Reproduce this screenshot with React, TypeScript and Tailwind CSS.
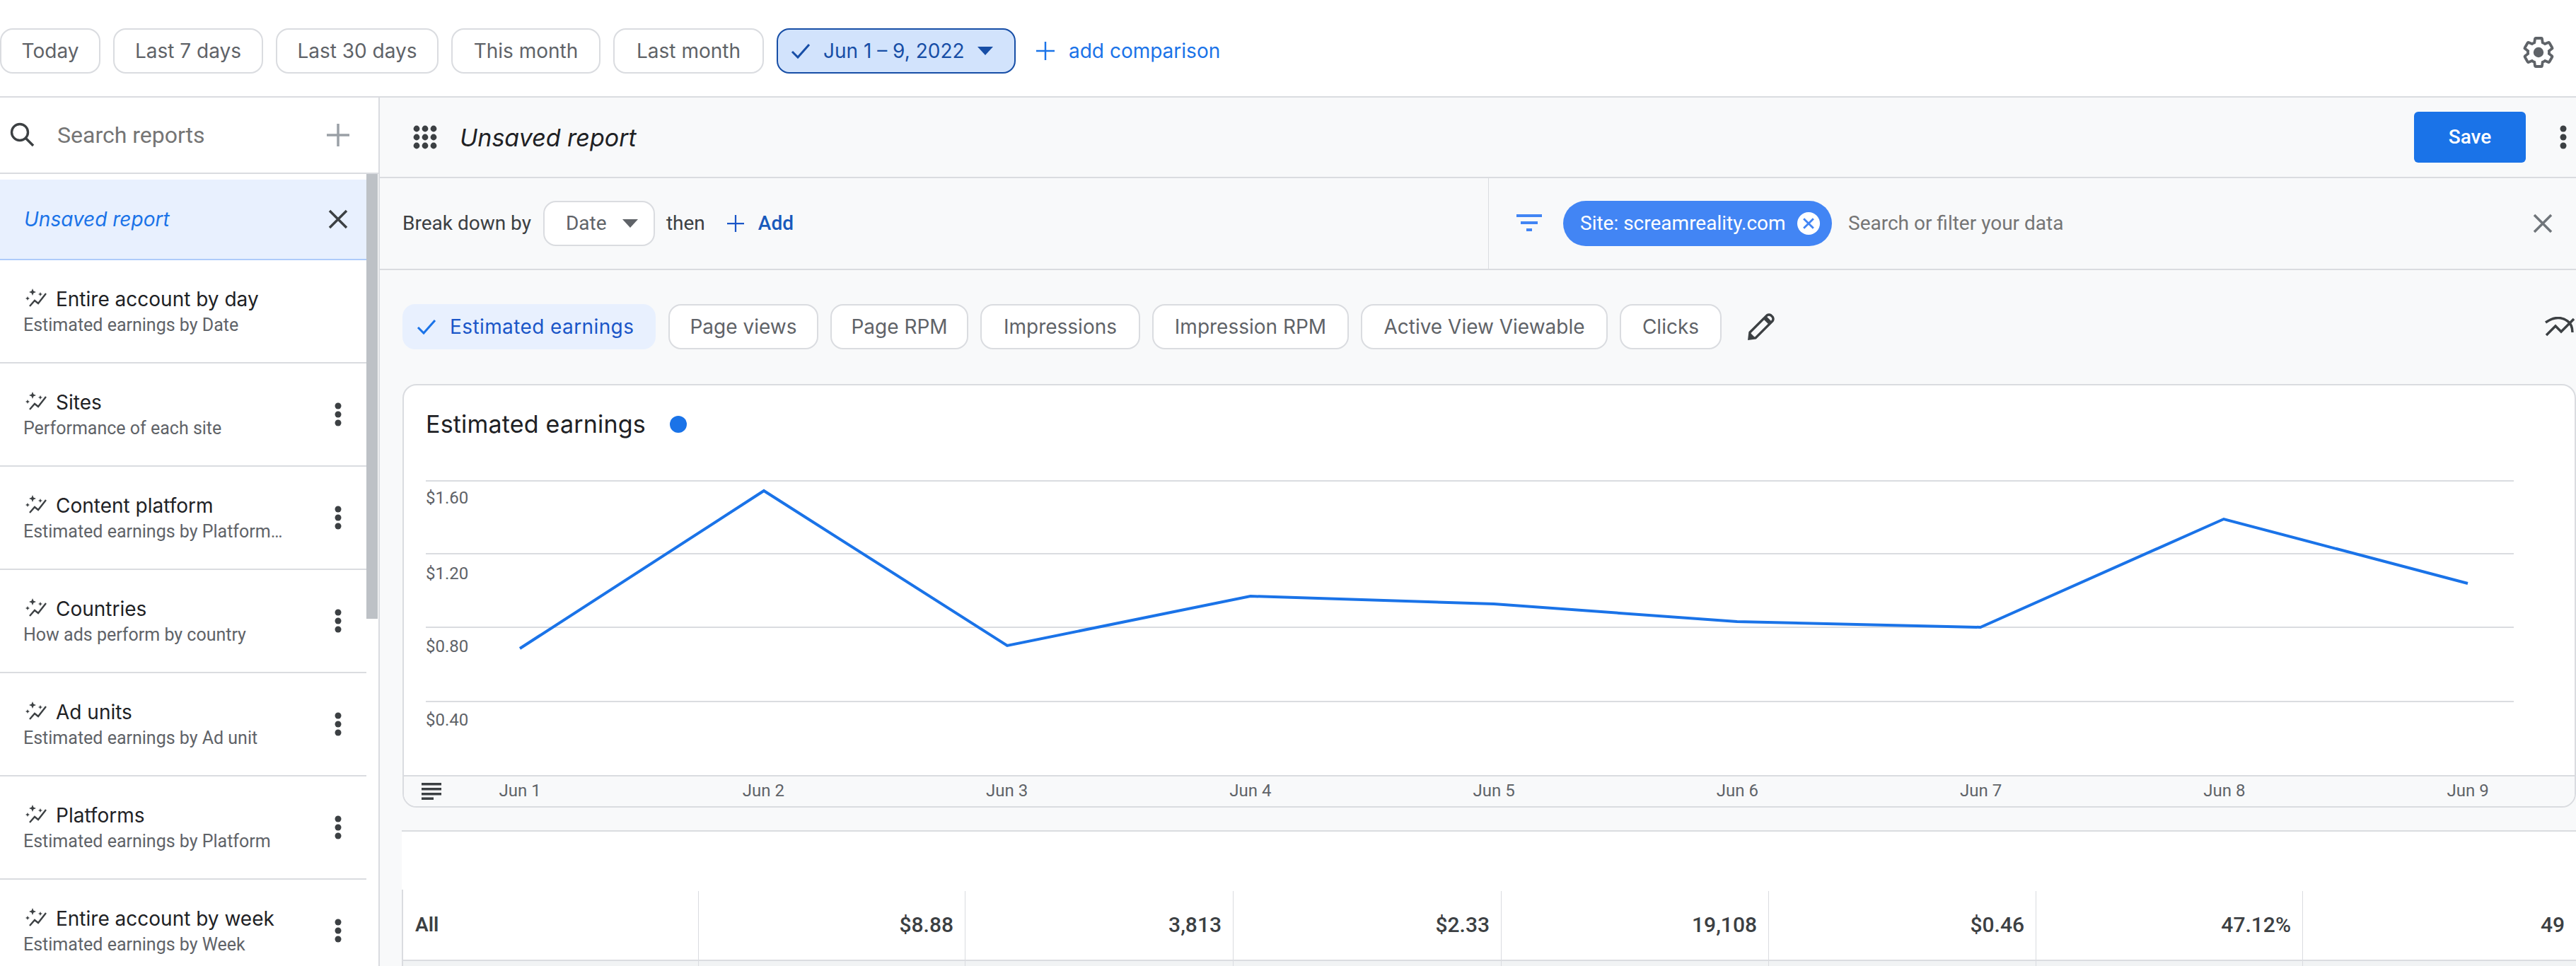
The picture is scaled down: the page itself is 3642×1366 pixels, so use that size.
import React from "react";

const gs = "font-['Inter',sans-serif]";

function Kebab({ className = "" }: { className?: string }) {
  return (
    <svg width="10" height="34" viewBox="0 0 10 34" className={className}>
      <circle cx="5" cy="5" r="4.5" fill="#3c4043" />
      <circle cx="5" cy="17" r="4.5" fill="#3c4043" />
      <circle cx="5" cy="29" r="4.5" fill="#3c4043" />
    </svg>
  );
}

function Close({ size, color, width = 3.5 }: { size: number; color: string; width?: number }) {
  return (
    <svg width={size} height={size} viewBox="0 0 28 28" fill="none" className="block">
      <path d="M2 2 L26 26 M26 2 L2 26" stroke={color} strokeWidth={width} />
    </svg>
  );
}

function Plus({ size, color, width = 3 }: { size: number; color: string; width?: number }) {
  return (
    <svg width={size} height={size} viewBox="0 0 32 32" fill="none" className="block shrink-0">
      <path d="M16 0 V32 M0 16 H32" stroke={color} strokeWidth={width} />
    </svg>
  );
}

function Check({ color, w = 28, h = 24 }: { color: string; w?: number; h?: number }) {
  return (
    <svg width={w} height={h} viewBox="0 0 28 24" fill="none" className="block shrink-0">
      <path d="M2 13 L10 21 L26 3" stroke={color} strokeWidth="3" />
    </svg>
  );
}

function Spark() {
  return (
    <svg width="30" height="26" viewBox="0 0 30 26" className="block shrink-0">
      <path d="M6 25 L13 17 L18 21 L29 7" fill="none" stroke="#3c4043" strokeWidth="2.4" />
      <path d="M10 0 L11.4 3.6 L15 5 L11.4 6.4 L10 10 L8.6 6.4 L5 5 L8.6 3.6 Z" fill="#3c4043" />
      <path d="M21 5 L22 7.2 L24.2 8 L22 8.8 L21 11 L20 8.8 L17.8 8 L20 7.2 Z" fill="#3c4043" />
      <path d="M3 11 L3.9 13.1 L6 14 L3.9 14.9 L3 17 L2.1 14.9 L0 14 L2.1 13.1 Z" fill="#3c4043" />
    </svg>
  );
}

function DateChip({ label, w }: { label: string; w: string }) {
  return (
    <div
      className={`${w} h-[64px] shrink-0 flex items-center justify-center rounded-[18px] border-2 border-[#dadce0] bg-white text-[28px] text-[#5f6368] ${gs}`}
    >
      {label}
    </div>
  );
}

function MetricChip({ label, w }: { label: string; w: string }) {
  return (
    <div
      className={`${w} h-[64px] shrink-0 flex items-center justify-center rounded-[18px] border-2 border-[#dadce0] bg-white text-[28px] text-[#5f6368] ${gs}`}
    >
      {label}
    </div>
  );
}

function ReportRow({ title, sub, kebab = true }: { title: string; sub: string; kebab?: boolean }) {
  return (
    <div className="h-[146px] shrink-0 border-b-2 border-[#dadce0] flex items-center relative">
      <div className="pl-[33px] w-[473px] mt-[1px]">
        <div className="flex items-center h-[36px]">
          <div className="ml-[3px] w-[43px] -mt-[4px]">
            <Spark />
          </div>
          <div className={`text-[28px] text-[#202124] leading-[36px] ${gs}`}>{title}</div>
        </div>
        <div className="mt-[3px] text-[25px] leading-[32px] text-[#5f6368] whitespace-nowrap">{sub}</div>
      </div>
      {kebab && <Kebab className="block" />}
    </div>
  );
}

const points = [
  [735, 917],
  [1080, 694],
  [1424, 913],
  [1768, 843],
  [2112, 854],
  [2456, 879],
  [2800, 887],
  [3144, 734],
  [3489, 825],
];

const jun = ["Jun 1", "Jun 2", "Jun 3", "Jun 4", "Jun 5", "Jun 6", "Jun 7", "Jun 8", "Jun 9"];

const cellValues = ["$8.88", "3,813", "$2.33", "19,108", "$0.46", "47.12%", "49"];

const gridCols = "grid grid-cols-[419px_377px_379px_379px_378px_378px_377px_1fr]";

export default function App() {
  const polyline = points.map(([x, y]) => `${x - 571},${y - 660}`).join(" ");
  return (
    <div className="w-[3642px] h-[1366px] overflow-hidden bg-white flex flex-col font-['Roboto',sans-serif]">
      {/* Date range bar */}
      <div className="h-[138px] shrink-0 border-b-2 border-[#dadce0] flex items-start pt-[40px] pr-[29px]">
        <div className="flex items-center gap-[18px]">
          <DateChip label="Today" w="w-[142px]" />
          <DateChip label="Last 7 days" w="w-[212px]" />
          <DateChip label="Last 30 days" w="w-[230px]" />
          <DateChip label="This month" w="w-[211px]" />
          <DateChip label="Last month" w="w-[213px]" />
          <div
            className={`w-[338px] h-[64px] shrink-0 flex items-center rounded-[18px] border-2 border-[#174ea6] bg-[#d2e3fc] text-[28px] text-[#174ea6] pl-[18px] ${gs}`}
          >
            <Check color="#174ea6" />
            <span className="ml-[18px] w-[218px] whitespace-nowrap">Jun 1 – 9, 2022</span>
            <svg width="22" height="12" viewBox="0 0 22 12" className="block">
              <path d="M0 0 H22 L11 12 Z" fill="#174ea6" />
            </svg>
          </div>
        </div>
        <div className="ml-[29px] h-[64px] flex items-center">
          <Plus size={26} color="#1a73e8" />
          <span className={`ml-[20px] text-[28px] text-[#1a73e8] ${gs}`}>add comparison</span>
        </div>
        <div className="ml-auto mt-[10px]">
          <svg width="48" height="48" viewBox="0 0 24 24" fill="none" className="block">
            <path
              d="M19.43 12.98c.04-.32.07-.64.07-.98 0-.34-.03-.66-.07-.98l2.11-1.65c.19-.15.24-.42.12-.64l-2-3.46c-.12-.22-.39-.3-.61-.22l-2.49 1c-.52-.4-1.08-.73-1.69-.98l-.38-2.65C14.46 2.18 14.25 2 14 2h-4c-.25 0-.46.18-.49.42l-.38 2.65c-.61.25-1.17.59-1.69.98l-2.49-1c-.23-.09-.49 0-.61.22l-2 3.46c-.13.22-.07.49.12.64l2.11 1.65c-.04.32-.07.65-.07.98 0 .33.03.66.07.98l-2.11 1.65c-.19.15-.24.42-.12.64l2 3.46c.12.22.39.3.61.22l2.49-1c.52.4 1.08.73 1.69.98l.38 2.65c.03.24.24.42.49.42h4c.25 0 .46-.18.49-.42l.38-2.65c.61-.25 1.17-.59 1.69-.98l2.49 1c.23.09.49 0 .61-.22l2-3.46c.12-.22.07-.49-.12-.64l-2.11-1.65z"
              stroke="#5f6368"
              strokeWidth="1.9"
            />
            <circle cx="12" cy="12" r="3.6" fill="#5f6368" />
          </svg>
        </div>
      </div>

      <div className="flex flex-1 min-h-0">
        {/* Sidebar */}
        <div className="w-[537px] shrink-0 border-r-2 border-[#dadce0] flex flex-col overflow-hidden">
          <div className="h-[108px] shrink-0 border-b-2 border-[#dadce0] flex items-center pl-[14px] pr-[41px]">
            <svg width="36" height="36" viewBox="0 0 36 36" fill="none" className="block shrink-0">
              <circle cx="14" cy="14" r="11.5" stroke="#3c4043" strokeWidth="3.4" />
              <path d="M22.5 22.5 L33 33" stroke="#3c4043" strokeWidth="3.6" />
            </svg>
            <span className="ml-[31px] text-[32px] text-[#757575]">Search reports</span>
            <div className="ml-auto">
              <Plus size={32} color="#9aa0a6" width={3.5} />
            </div>
          </div>
          <div className="flex flex-1 min-h-0">
            <div className="w-[518px] shrink-0 flex flex-col overflow-hidden pt-[8px]">
              <div className="h-[114px] shrink-0 bg-[#e8f0fe] border-b-2 border-[#aecbfa] flex items-center pl-[34px] pr-[26px]">
                <span className={`text-[28px] italic text-[#1a73e8] ${gs}`}>Unsaved report</span>
                <div className="ml-auto">
                  <Close size={28} color="#3c4043" />
                </div>
              </div>
              <ReportRow title="Entire account by day" sub="Estimated earnings by Date" kebab={false} />
              <ReportRow title="Sites" sub="Performance of each site" />
              <ReportRow title="Content platform" sub="Estimated earnings by Platform…" />
              <ReportRow title="Countries" sub="How ads perform by country" />
              <ReportRow title="Ad units" sub="Estimated earnings by Ad unit" />
              <ReportRow title="Platforms" sub="Estimated earnings by Platform" />
              <ReportRow title="Entire account by week" sub="Estimated earnings by Week" />
            </div>
            <div className="w-[16px] shrink-0">
              <div className="h-[629px] bg-[#bdc1c6]" />
            </div>
          </div>
        </div>

        {/* Main */}
        <div className="flex-1 min-w-0 bg-[#f8f9fa] flex flex-col overflow-hidden">
          <div className="h-[114px] shrink-0 border-b-2 border-[#dadce0] flex items-center pl-[47px] pr-[13px]">
            <svg width="34" height="34" viewBox="0 0 34 34" className="block shrink-0">
              {[5, 17, 29].map((cy) =>
                [5, 17, 29].map((cx) => <circle key={`${cx}-${cy}`} cx={cx} cy={cy} r="4.4" fill="#3c4043" />)
              )}
            </svg>
            <span className={`ml-[32px] text-[34px] italic text-[#202124] ${gs}`}>Unsaved report</span>
            <div className="ml-auto w-[158px] h-[72px] rounded-[6px] bg-[#1a73e8] flex items-center justify-center text-[28px] text-white font-medium">
              Save
            </div>
            <Kebab className="block ml-[48px]" />
          </div>

          <div className="h-[130px] shrink-0 border-b-2 border-[#dadce0] flex">
            <div className="w-[1567px] shrink-0 flex items-center pl-[32px] text-[28px] text-[#3c4043]">
              <span>Break down by</span>
              <div className="ml-[17px] w-[158px] h-[64px] flex items-center rounded-[18px] border-2 border-[#dadce0] bg-white pl-[30px] text-[#5f6368]">
                <span className="w-[80px]">Date</span>
                <svg width="22" height="12" viewBox="0 0 22 12" className="block">
                  <path d="M0 0 H22 L11 12 Z" fill="#5f6368" />
                </svg>
              </div>
              <span className="ml-[16px]">then</span>
              <div className="ml-[31px]">
                <Plus size={24} color="#1a56c8" />
              </div>
              <span className="ml-[20px] text-[#185abc] font-medium">Add</span>
            </div>
            <div className="flex-1 border-l border-[#dadce0] flex items-center pl-[39px] pr-[33px]">
              <svg width="36" height="26" viewBox="0 0 36 26" className="block shrink-0">
                <rect x="0" y="0" width="36" height="4" fill="#4285f4" />
                <rect x="6" y="10" width="24" height="4" fill="#4285f4" />
                <rect x="14" y="20" width="8" height="4" fill="#4285f4" />
              </svg>
              <div className="ml-[30px] w-[380px] h-[64px] rounded-full bg-[#4285f4] flex items-center pl-[24px] text-[28px] text-white">
                <span>Site: screamreality.com</span>
                <div className="ml-auto mr-[17px] w-[32px] h-[32px] rounded-full bg-white flex items-center justify-center">
                  <Close size={16} color="#4285f4" width={5} />
                </div>
              </div>
              <span className="ml-[23px] text-[28px] text-[#757575]">Search or filter your data</span>
              <div className="ml-auto">
                <Close size={28} color="#70757a" />
              </div>
            </div>
          </div>

          <div className="flex-1 min-h-0 flex flex-col pl-[32px]">
            <div className="pt-[48px] flex items-center h-[112px] shrink-0">
              <div
                className={`w-[358px] h-[64px] shrink-0 flex items-center rounded-[18px] bg-[#e8f0fe] pl-[20px] text-[28px] text-[#1a56c8] ${gs}`}
              >
                <Check color="#1a73e8" />
                <span className="ml-[19px] tracking-[0.4px]">Estimated earnings</span>
              </div>
              <div className="flex items-center gap-[17px] ml-[18px]">
                <MetricChip label="Page views" w="w-[212px]" />
                <MetricChip label="Page RPM" w="w-[195px]" />
                <MetricChip label="Impressions" w="w-[226px]" />
                <MetricChip label="Impression RPM" w="w-[278px]" />
                <MetricChip label="Active View Viewable" w="w-[349px]" />
                <MetricChip label="Clicks" w="w-[144px]" />
              </div>
              <svg width="38" height="38" viewBox="0 0 38 38" fill="none" className="block ml-[37px] shrink-0">
                <path
                  d="M2 36 L3 27 L27 3 Q30 1 33 3 L35 5 Q37 8 35 11 L11 35 Z"
                  stroke="#3c4043"
                  strokeWidth="3.4"
                />
                <path d="M2 36 L3 27 L11 35 Z" fill="#3c4043" />
                <path d="M24 6 L32 14" stroke="#3c4043" strokeWidth="6" />
              </svg>
              <svg width="42" height="28" viewBox="0 0 42 28" fill="none" className="block ml-auto shrink-0 mr-[2px]">
                <path d="M2 26 L15 13 L23 21 L41 3" stroke="#3c4043" strokeWidth="3.4" />
                <path d="M1 8 Q18 -4 32 6 Q39 11 39 22" stroke="#3c4043" strokeWidth="3.4" />
              </svg>
            </div>

            <div className="mt-[49px] h-[599px] shrink-0 rounded-[20px] border-2 border-[#dadce0] bg-white flex flex-col overflow-hidden">
              <div className="h-[117px] shrink-0 flex items-center pl-[31px] pb-[4px] -mt-[2px]">
                <span className={`text-[34px] text-[#202124] tracking-[0.2px] ${gs}`}>Estimated earnings</span>
                <div className="ml-[34px] w-[24px] h-[24px] rounded-full bg-[#1a73e8]" />
              </div>
              <svg width="3070" height="436" viewBox="0 0 3070 436" className="block shrink-0">
                {[20, 123, 227, 332].map((y) => (
                  <line key={y} x1="31" x2="2983" y1={y} y2={y} stroke="#dadce0" strokeWidth="2" />
                ))}
                {[
                  ["$1.60", 52],
                  ["$1.20", 159],
                  ["$0.80", 262],
                  ["$0.40", 366],
                ].map(([t, y]) => (
                  <text
                    key={t as string}
                    x="31"
                    y={y as number}
                    fontFamily="Roboto, sans-serif"
                    fontSize="24"
                    fill="#5f6368"
                  >
                    {t}
                  </text>
                ))}
                <polyline points={polyline} fill="none" stroke="#1a73e8" strokeWidth="4" />
              </svg>
              <div className="flex-1 border-t-2 border-[#dadce0] bg-[#f8f9fa] flex items-center pl-[25px]">
                <svg width="28" height="24" viewBox="0 0 28 24" className="block shrink-0">
                  <rect x="0" y="0" width="28" height="3.5" fill="#3c4043" />
                  <rect x="0" y="7" width="28" height="3.5" fill="#3c4043" />
                  <rect x="0" y="14" width="28" height="3.5" fill="#3c4043" />
                  <rect x="0" y="20.5" width="17" height="3.5" fill="#3c4043" />
                </svg>
                <div className="flex -ml-[61px] text-[24px] text-[#5f6368] -mt-[2px]">
                  {jun.map((d) => (
                    <div key={d} className="w-[344.25px] text-center">
                      {d}
                    </div>
                  ))}
                </div>
              </div>
            </div>

            <div className="h-[32px] shrink-0" />

            <div className="flex-1 min-h-0 -ml-px border-t-2 border-[#dadce0] bg-white flex flex-col pt-[84px]">
              <div className={`${gridCols} h-[99px] shrink-0 border-b-2 border-[#dadce0] text-[30px] text-[#3c4043] font-medium`}>
                <div className="border-l-2 border-[#dadce0] flex items-center pl-[17px] text-[28px] font-semibold -mt-[2px]">All</div>
                {cellValues.map((v) => (
                  <div key={v} className="border-l border-[#dadce0] flex items-center justify-end pr-[16px] pb-[2px]">
                    {v}
                  </div>
                ))}
              </div>
              <div className={`${gridCols} flex-1 bg-[#f1f3f4]`}>
                <div className="border-l-2 border-[#dadce0]" />
                {cellValues.map((v) => (
                  <div key={v} className="border-l border-[#dadce0]" />
                ))}
              </div>
            </div>
          </div>
        </div>
      </div>
    </div>
  );
}
